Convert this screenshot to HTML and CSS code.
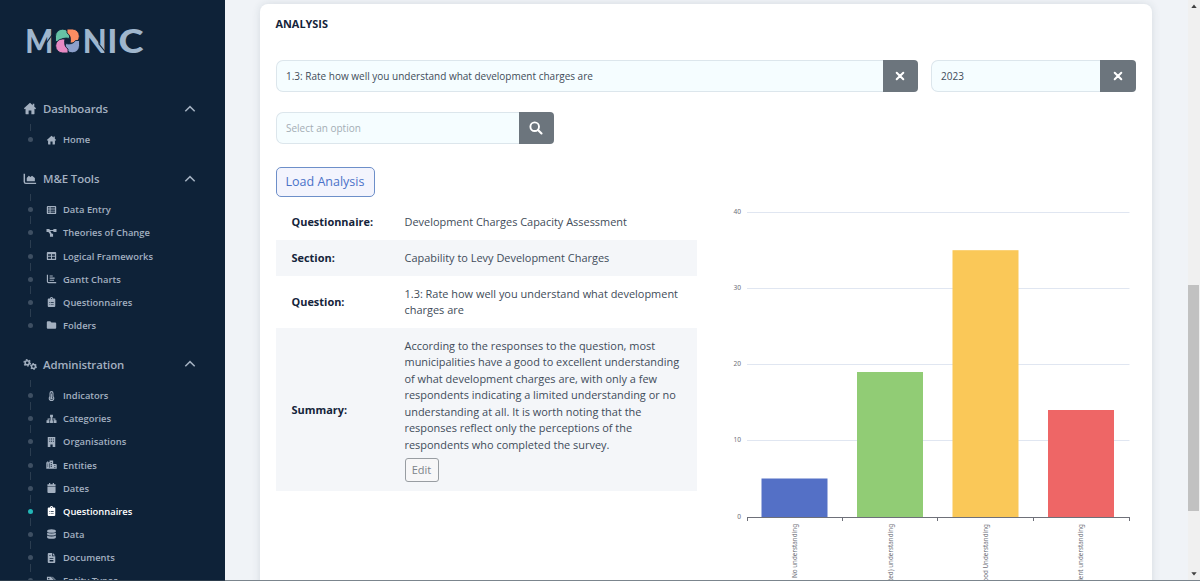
FILE: index.html
```html
<!DOCTYPE html>
<html lang="en">

<head>
    <meta charset="UTF-8">
    <meta name="viewport" content="width=device-width, initial-scale=1.0">
    <title>Monic - Analysis</title>
    <link rel="stylesheet" href="styles.css">
</head>

<body>
    <!-- Icon sprite -->
    <svg class="sprite" xmlns="http://www.w3.org/2000/svg">
        <symbol id="i-home" viewBox="0 0 16 16"><path d="M8 1 0.5 7.8 1.6 9 2.5 8.3V14.5Q2.5 15 3 15H6.3V10.5H9.7V15H13Q13.5 15 13.5 14.5V8.3L14.4 9 15.5 7.8 13.3 5.8V2.3H11.3V4Z"/></symbol>
        <symbol id="i-area" viewBox="0 0 16 16"><path d="M1 2V12Q1 14 3 14H15.5" fill="none" stroke="currentColor" stroke-width="1.8"/><path d="M4 11.5V7.5L6.5 4.5 8.5 6 10.5 4.5 14 7.5V11.5Z"/></symbol>
        <symbol id="i-cogs" viewBox="0 0 20 16"><circle cx="6" cy="5.5" r="3" fill="none" stroke="currentColor" stroke-width="2.2"/><circle cx="6" cy="5.5" r="4.6" fill="none" stroke="currentColor" stroke-width="1.8" stroke-dasharray="2.4 2.4"/><circle cx="15" cy="10.8" r="2.7" fill="none" stroke="currentColor" stroke-width="2"/><circle cx="15" cy="10.8" r="4.1" fill="none" stroke="currentColor" stroke-width="1.6" stroke-dasharray="2.15 2.15"/></symbol>
        <symbol id="i-list" viewBox="0 0 16 16"><path fill-rule="evenodd" d="M2 1.5H14Q15.5 1.5 15.5 3V13Q15.5 14.5 14 14.5H2Q0.5 14.5 0.5 13V3Q0.5 1.5 2 1.5ZM2.5 3.5V5.5H5V3.5ZM6.5 3.5V5.5H13.5V3.5ZM2.5 7V9H5V7ZM6.5 7V9H13.5V7ZM2.5 10.5V12.5H5V10.5ZM6.5 10.5V12.5H13.5V10.5Z"/></symbol>
        <symbol id="i-flow" viewBox="0 0 16 16"><path d="M0 1.5H5V3.3H11V1.5H16V6.5H11V4.9H6L8.5 9H10.5V14H5.5V9.6L3 6.5H0Z"/></symbol>
        <symbol id="i-table" viewBox="0 0 16 16"><path fill-rule="evenodd" d="M2 1.5H14Q15.5 1.5 15.5 3V13Q15.5 14.5 14 14.5H2Q0.5 14.5 0.5 13V3Q0.5 1.5 2 1.5ZM2.5 5V7.5H7.2V5ZM8.8 5V7.5H13.5V5ZM2.5 9.2V12.5H7.2V9.2ZM8.8 9.2V12.5H13.5V9.2Z"/></symbol>
        <symbol id="i-gantt" viewBox="0 0 16 16"><path d="M1.5 1V12Q1.5 13.8 3.3 13.8H15.5M5 3.2H10M5 6.6H13M5 10H12" fill="none" stroke="currentColor" stroke-width="1.9"/></symbol>
        <symbol id="i-clip" viewBox="0 0 16 16"><path fill-rule="evenodd" d="M3.5 2.3H5.5Q6 0 8 0T10.5 2.3H12.5Q14 2.3 14 3.8V14.5Q14 16 12.5 16H3.5Q2 16 2 14.5V3.8Q2 2.3 3.5 2.3ZM7.2 1.8V3.2H8.8V1.8ZM4.5 8V9H6V8ZM7 8V9H11.5V8ZM4.5 11V12H6V11ZM7 11V12H11.5V11Z"/></symbol>
        <symbol id="i-folder" viewBox="0 0 16 16"><path d="M2 2H6L8 4H14Q15.5 4 15.5 5.5V12.5Q15.5 14 14 14H2Q0.5 14 0.5 12.5V3.5Q0.5 2 2 2Z"/></symbol>
        <symbol id="i-thermo" viewBox="0 0 16 16"><path fill-rule="evenodd" d="M4.8 3.5Q4.8 0 8 0T11.2 3.5V8.5Q12.5 10 12.5 11.5Q12.5 16 8 16T3.5 11.5Q3.5 10 4.8 8.5ZM6.5 3.5V9.2Q5.2 10.3 5.2 11.5Q5.2 14.2 8 14.2T10.8 11.5Q10.8 10.3 9.5 9.2V3.5Q9.5 1.8 8 1.8T6.5 3.5Z"/><path d="M7.3 4H8.7V9.8Q10 10.3 10 11.5T8 13.3 6 11.5 7.3 9.8Z"/></symbol>
        <symbol id="i-tree" viewBox="0 0 16 16"><path d="M5.7 1H10.3V5.5H8.8V7.3H14.2V10H16V14.5H11.3V10H12.7V8.8H8.8V10H10.3V14.5H5.7V10H7.2V8.8H3.3V10H4.7V14.5H0V10H1.8V7.3H7.2V5.5H5.7Z"/></symbol>
        <symbol id="i-building" viewBox="0 0 16 16"><path fill-rule="evenodd" d="M2 0H14V16H9.8V12H6.2V16H2ZM4.5 2.5V4H6V2.5ZM7.3 2.5V4H8.8V2.5ZM10.2 2.5V4H11.7V2.5ZM4.5 6V7.5H6V6ZM7.3 6V7.5H8.8V6ZM10.2 6V7.5H11.7V6Z"/></symbol>
        <symbol id="i-city" viewBox="0 0 20 16"><path fill-rule="evenodd" d="M1 3H2.5V1H4V3H6.5V0H13V6H18Q19.5 6 19.5 7.5V15H0.5V3.5ZM2.5 5.5V7H4V5.5ZM2.5 9V10.5H4V9ZM8.5 2.5V4H10.8V2.5ZM8.5 6V7.5H10.8V6ZM8.5 9.5V11H10.8V9.5ZM15 8.5V10H17V8.5ZM15 11.5V13H17V11.5ZM6 5V13H7V5Z"/></symbol>
        <symbol id="i-cal" viewBox="0 0 16 16"><path d="M1.5 2H4V0H6V2H10V0H12V2H14.5V4.7H1.5ZM1.5 5.7H14.5V14.5Q14.5 16 13 16H3Q1.5 16 1.5 14.5Z"/></symbol>
        <symbol id="i-db" viewBox="0 0 16 16"><path d="M1 3Q1 0.5 8 0.5T15 3V4Q15 6 8 6T1 4ZM1 6Q3 7.3 8 7.3T15 6V8.5Q15 10.5 8 10.5T1 8.5ZM1 10.5Q3 12 8 12T15 10.5V13Q15 15.5 8 15.5T1 13Z"/></symbol>
        <symbol id="i-doc" viewBox="0 0 16 16"><path fill-rule="evenodd" d="M3.5 0H9V5H14V14.5Q14 16 12.5 16H3.5Q2 16 2 14.5V1.5Q2 0 3.5 0ZM10.2 0 14 3.8H10.2ZM5 8V9H11V8ZM5 11V13.5H11V11ZM4 3V4H7V3Z"/></symbol>
        <symbol id="i-tag" viewBox="0 0 18 16"><path fill-rule="evenodd" d="M1.5 1H8L14.5 8 8.5 15 1.5 8.5ZM3.5 3V5H5.5V3Z"/><path d="M10 1 17 8 11 15" fill="none" stroke="currentColor" stroke-width="1.6"/></symbol>
        <symbol id="i-up" viewBox="0 0 12 8"><path d="M1.3 6.3 6 1.6 10.7 6.3" fill="none" stroke="currentColor" stroke-width="1.5"/></symbol>
        <symbol id="i-x" viewBox="0 0 10 10"><path d="M1.7 1.7 8.3 8.3M8.3 1.7 1.7 8.3" fill="none" stroke="currentColor" stroke-width="2" stroke-linecap="round"/></symbol>
        <symbol id="i-search" viewBox="0 0 14 14"><circle cx="5.7" cy="5.7" r="4.3" fill="none" stroke="currentColor" stroke-width="1.9"/><path d="M9 9 12.5 12.5" stroke="currentColor" stroke-width="2.1" stroke-linecap="round"/></symbol>
        <symbol id="i-petal" viewBox="-13 -13 26 26"><path d="M-12 .5V-4.8A7 7 0 0 1-5-11.8H-4.6A6.6 6.6 0 0 1 2-5.2V-2.6Q-5.4-4-8 .5Z" stroke="#0e2238" stroke-width=".9"/></symbol>
    </svg>

    <div class="app">
        <nav class="sidebar">
            <svg class="logo" viewBox="0 0 120 30" width="120" height="30">
                <text x="-0.7" y="26.5" textLength="28" lengthAdjust="spacingAndGlyphs">M</text>
                <path d="M18.6 19.5 26 9" class="logo-cut" />
                <g transform="translate(41.5 15)">
                    <use href="#i-petal" x="-13" y="-13" width="26" height="26" color="#66c2a5" />
                    <use href="#i-petal" x="-13" y="-13" width="26" height="26" color="#fc8d62" transform="rotate(90)" />
                    <use href="#i-petal" x="-13" y="-13" width="26" height="26" color="#8da0cb" transform="rotate(180)" />
                    <use href="#i-petal" x="-13" y="-13" width="26" height="26" color="#e78ac3" transform="rotate(270)" />
                </g>
                <text x="56.8" y="26.5" textLength="24" lengthAdjust="spacingAndGlyphs">N</text>
                <path d="M73 3V18L79 25.5" class="logo-cut" />
                <text x="81.5" y="26.5">I</text>
                <text x="92.5" y="26.5" textLength="25" lengthAdjust="spacingAndGlyphs">C</text>
            </svg>

            <div class="group">
                <div class="group-head"><svg class="ico"><use href="#i-home" /></svg>Dashboards<svg class="chev"><use href="#i-up" /></svg></div>
                <ul class="menu">
                    <li><svg class="ico"><use href="#i-home" /></svg>Home</li>
                </ul>
            </div>

            <div class="group">
                <div class="group-head"><svg class="ico"><use href="#i-area" /></svg>M&amp;E Tools<svg class="chev"><use href="#i-up" /></svg></div>
                <ul class="menu">
                    <li><svg class="ico"><use href="#i-list" /></svg>Data Entry</li>
                    <li><svg class="ico"><use href="#i-flow" /></svg>Theories of Change</li>
                    <li><svg class="ico"><use href="#i-table" /></svg>Logical Frameworks</li>
                    <li><svg class="ico"><use href="#i-gantt" /></svg>Gantt Charts</li>
                    <li><svg class="ico"><use href="#i-clip" /></svg>Questionnaires</li>
                    <li><svg class="ico"><use href="#i-folder" /></svg>Folders</li>
                </ul>
            </div>

            <div class="group">
                <div class="group-head"><svg class="ico"><use href="#i-cogs" /></svg>Administration<svg class="chev"><use href="#i-up" /></svg></div>
                <ul class="menu">
                    <li><svg class="ico"><use href="#i-thermo" /></svg>Indicators</li>
                    <li><svg class="ico"><use href="#i-tree" /></svg>Categories</li>
                    <li><svg class="ico"><use href="#i-building" /></svg>Organisations</li>
                    <li><svg class="ico"><use href="#i-city" /></svg>Entities</li>
                    <li><svg class="ico"><use href="#i-cal" /></svg>Dates</li>
                    <li class="active"><svg class="ico"><use href="#i-clip" /></svg>Questionnaires</li>
                    <li><svg class="ico"><use href="#i-db" /></svg>Data</li>
                    <li><svg class="ico"><use href="#i-doc" /></svg>Documents</li>
                    <li><svg class="ico"><use href="#i-tag" /></svg>Entity Types</li>
                </ul>
            </div>
        </nav>

        <main class="main">
            <section class="card">
                <h2 class="title">ANALYSIS</h2>

                <div class="filters">
                    <div class="field field-question">
                        <div class="value">1.3: Rate how well you understand what development charges are</div>
                        <button class="addon"><svg class="x"><use href="#i-x" /></svg></button>
                    </div>
                    <div class="field field-year">
                        <div class="value">2023</div>
                        <button class="addon"><svg class="x"><use href="#i-x" /></svg></button>
                    </div>
                    <div class="field field-option">
                        <div class="value placeholder">Select an option</div>
                        <button class="addon"><svg class="search"><use href="#i-search" /></svg></button>
                    </div>
                </div>

                <button class="load">Load Analysis</button>

                <div class="result">
                    <div class="details">
                        <div class="row row-single"><b>Questionnaire:</b><span>Development Charges Capacity Assessment</span></div>
                        <div class="row row-single shade"><b>Section:</b><span>Capability to Levy Development Charges</span></div>
                        <div class="row row-question"><b>Question:</b><span>1.3: Rate how well you understand what development<br>charges are</span></div>
                        <div class="row row-summary shade">
                            <b>Summary:</b>
                            <div>
                                According to the responses to the question, most<br>
                                municipalities have a good to excellent understanding<br>
                                of what development charges are, with only a few<br>
                                respondents indicating a limited understanding or no<br>
                                understanding at all. It is worth noting that the<br>
                                responses reflect only the perceptions of the<br>
                                respondents who completed the survey.
                                <button class="edit">Edit</button>
                            </div>
                        </div>
                    </div>

                    <!-- Bar chart -->
                    <svg class="chart" viewBox="720 204 420 396" width="420" height="396">
                        <path class="grid" d="M747 212.5H1129.5M747 288.5H1129.5M747 364.5H1129.5M747 440.5H1129.5" />
                        <rect x="761.5" y="478.5" width="66" height="38.5" fill="#5470c6" />
                        <rect x="857" y="372" width="66" height="145" fill="#91cc75" />
                        <rect x="952.5" y="250.2" width="66" height="266.8" fill="#fac858" />
                        <rect x="1048" y="410" width="66" height="107" fill="#ee6666" />
                        <path class="axis" d="M747 517.5H1130M747.5 517V521M842.5 517V521M937.5 517V521M1033.5 517V521M1129.5 517V521" />
                        <g class="tick">
                            <text x="741" y="213.6">40</text>
                            <text x="741" y="289.6">30</text>
                            <text x="741" y="365.8">20</text>
                            <text x="741" y="442">10</text>
                            <text x="741" y="518.6">0</text>
                        </g>
                        <g class="cat">
                            <text transform="translate(797 524) rotate(-90)">No understanding</text>
                            <text transform="translate(892.5 524) rotate(-90)">Some (limited) understanding</text>
                            <text transform="translate(988 524) rotate(-90)">Good Understanding</text>
                            <text transform="translate(1083 524) rotate(-90)">Excellent understanding</text>
                        </g>
                    </svg>
                </div>
            </section>
        </main>

        <div class="scrollbar">
            <svg viewBox="0 0 12 12" width="12" height="12"><path d="M3.3 8 6 4.6 8.7 8Z" /></svg>
            <div class="thumb"></div>
            <svg class="down" viewBox="0 0 12 12" width="12" height="12"><path d="M3.3 4.2 6 7.6 8.7 4.2Z" /></svg>
        </div>
    </div>
</body>

</html>
```
FILE: styles.css
```css
* {
    box-sizing: border-box;
}

body {
    margin: 0;
    font-family: "Open Sans", "Noto Sans", sans-serif;
    font-size: 10.95px;
    color: #414c59;
    overflow: hidden;
}

button {
    font-family: inherit;
    padding: 0;
    border: 0;
}

svg {
    fill: currentColor;
    flex: none;
}

.sprite {
    display: none;
}

.app {
    display: flex;
    height: 581px;
    overflow: hidden;
    background: #f0f3f7;
}

/* Sidebar */
.sidebar {
    width: 225px;
    height: 581px;
    flex: none;
    padding: 26px 29px 0 23px;
    overflow: hidden;
    background: #0e2238;
    border-bottom: 1px solid #2c3c4c;
    color: #a3b0c0;
}

.logo {
    display: block;
    overflow: visible;
    margin: 0 0 41.5px 3px;
    color: #9fb6cd;
    font-family: Lato, sans-serif;
    font-weight: 900;
    font-size: 32px;
}

.logo-cut {
    fill: none;
    stroke: #0e2238;
    stroke-width: 1.1;
}

.group {
    margin-bottom: 16.4px;
}

.group-head {
    display: flex;
    align-items: center;
    height: 22px;
    font-size: 11.4px;
    font-weight: 600;
    letter-spacing: -.1px;
    line-height: 15px;
}

.group-head .ico {
    width: 14px;
    height: 13px;
    margin-right: 6px;
}

.chev {
    width: 12px;
    height: 8px;
    margin-left: auto;
}

.menu {
    list-style: none;
    margin: 0;
    padding: 8.6px 0 0;
    background: linear-gradient(#2b3d50, #2b3d50) 7px 4.6px / 1px 4px no-repeat;
}

.menu li {
    display: flex;
    align-items: center;
    height: 23.15px;
    font-size: 9.4px;
    font-weight: 600;
    line-height: 13px;
    background:
        linear-gradient(#2b3d50, #2b3d50) 7px 0 / 1px 3px no-repeat,
        linear-gradient(#2b3d50, #2b3d50) 7px 100% / 1px 5px no-repeat;
}

.menu li:last-child {
    background: linear-gradient(#2b3d50, #2b3d50) 7px 0 / 1px 3px no-repeat;
}

.menu li::before {
    content: "";
    width: 5px;
    height: 5px;
    margin: 0 13px 0 5px;
    border-radius: 50%;
    background: #3e4f62;
}

.menu .ico {
    width: 11px;
    height: 10px;
    margin-right: 6px;
}

.menu .active {
    color: #fff;
}

.menu .active::before {
    background: #23b7b7;
}

/* Content */
.main {
    flex: 1;
    height: 581px;
    padding: 4px 36px 0 35px;
    overflow: hidden;
    border-bottom: 1px solid #7b858d;
}

.card {
    height: 620px;
    padding: 0 16px 0 15.5px;
    background: #fff;
    border-radius: 8px;
    box-shadow: 0 0 8px rgba(40, 60, 80, .13);
}

.title {
    margin: 0;
    padding-top: 12px;
    height: 56px;
    font-size: 10.9px;
    line-height: 16px;
    font-weight: 700;
    color: #14243a;
}

.filters {
    display: flex;
    flex-wrap: wrap;
    gap: 20px 12.5px;
}

.field {
    display: flex;
    height: 32px;
}

.field-question {
    width: 642.5px;
}

.field-year {
    width: 205.4px;
}

.field-option {
    width: 278.5px;
}

.value {
    flex: 1;
    padding-left: 9.5px;
    border: 1px solid #dce6ec;
    border-right: 0;
    border-radius: 7px 0 0 7px;
    background: #f5fdff;
    font-size: 10px;
    line-height: 30px;
}

.placeholder {
    color: #a4adb5;
}

.addon {
    display: flex;
    align-items: center;
    justify-content: center;
    width: 35.5px;
    border-radius: 0 4px 4px 0;
    background: #6c757d;
    color: #fff;
}

.x {
    width: 10px;
    height: 10px;
}

.search {
    width: 14px;
    height: 14px;
}

.load {
    display: block;
    width: 99px;
    height: 30px;
    margin-top: 23px;
    padding-bottom: 1px;
    border: 1px solid #6d8fc9;
    border-radius: 5px;
    background: #f3f4fd;
    color: #4a72c8;
    font-size: 12.5px;
}

.result {
    display: flex;
    align-items: flex-start;
    gap: 23px;
    margin-top: 7px;
}

.details {
    width: 421.5px;
    flex: none;
    line-height: 16.4px;
}

.row {
    display: grid;
    grid-template-columns: 113px 1fr;
    align-items: center;
    padding-left: 16px;
    white-space: nowrap;
}

.row b {
    color: #14243a;
}

.shade {
    background: #f4f6f9;
}

.row-single {
    height: 36px;
}

.row-question {
    height: 52px;
}

.row-summary {
    height: 163px;
    padding-top: 1px;
}

.edit {
    display: block;
    width: 34px;
    height: 24px;
    margin-top: 5px;
    border: 1px solid #989da2;
    border-radius: 3px;
    background: #f7f7f8;
    color: #7d8389;
    font-size: 11px;
}

/* Chart */
.grid {
    fill: none;
    stroke: #e0e6f1;
}

.axis {
    fill: none;
    stroke: #6e7079;
}

.tick,
.cat {
    font-family: "Noto Sans", sans-serif;
    font-size: 6.6px;
    fill: #6e7079;
    text-anchor: end;
}

.cat {
    font-size: 6.3px;
}

/* Scrollbar */
.scrollbar {
    display: flex;
    flex-direction: column;
    width: 12px;
    height: 581px;
    flex: none;
    background: #f0f0f0;
    border-bottom: 1px solid #7b858d;
    color: #404040;
}

.thumb {
    width: 11px;
    height: 226px;
    margin-top: 273px;
    background: #c1c1c1;
}

.down {
    margin-top: auto;
}
```
